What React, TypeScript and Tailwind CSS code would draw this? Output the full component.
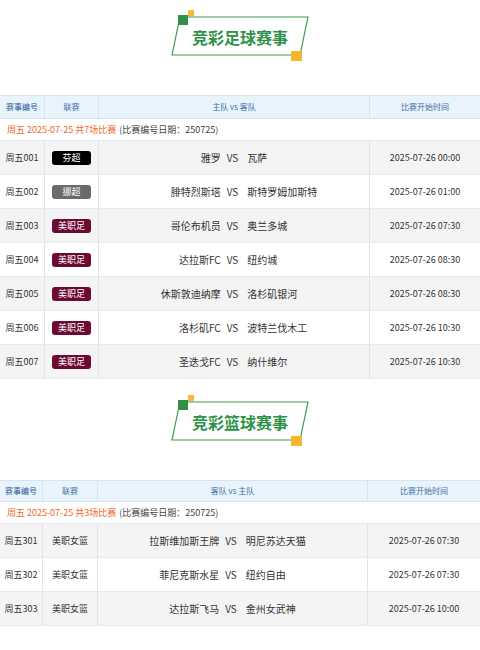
import React from "react";

type Match = { no: string; league: string; badge?: string; home: string; away: string; time: string };

const football: Match[] = [
  { no: "周五001", league: "芬超", badge: "bg-[#000000]", home: "雅罗", away: "瓦萨", time: "2025-07-26 00:00" },
  { no: "周五002", league: "挪超", badge: "bg-[#6b6b6b]", home: "腓特烈斯塔", away: "斯特罗姆加斯特", time: "2025-07-26 01:00" },
  { no: "周五003", league: "美职足", badge: "bg-[#6d0a34]", home: "哥伦布机员", away: "奥兰多城", time: "2025-07-26 07:30" },
  { no: "周五004", league: "美职足", badge: "bg-[#6d0a34]", home: "达拉斯FC", away: "纽约城", time: "2025-07-26 08:30" },
  { no: "周五005", league: "美职足", badge: "bg-[#6d0a34]", home: "休斯敦迪纳摩", away: "洛杉矶银河", time: "2025-07-26 08:30" },
  { no: "周五006", league: "美职足", badge: "bg-[#6d0a34]", home: "洛杉矶FC", away: "波特兰伐木工", time: "2025-07-26 10:30" },
  { no: "周五007", league: "美职足", badge: "bg-[#6d0a34]", home: "圣迭戈FC", away: "纳什维尔", time: "2025-07-26 10:30" },
];

const basketball: Match[] = [
  { no: "周五301", league: "美职女篮", home: "拉斯维加斯王牌", away: "明尼苏达天猫", time: "2025-07-26 07:30" },
  { no: "周五302", league: "美职女篮", home: "菲尼克斯水星", away: "纽约自由", time: "2025-07-26 07:30" },
  { no: "周五303", league: "美职女篮", home: "达拉斯飞马", away: "金州女武神", time: "2025-07-26 10:00" },
];

const Banner = ({ title }: { title: string }) => (
  <div className="relative mx-auto w-[140px] h-[56px]">
    <svg className="absolute inset-0" width="140" height="56" viewBox="0 0 140 56">
      <polygon points="10,9 138,9 130,47 2,47" fill="#ffffff" stroke="#3a9a50" strokeWidth="1.2" />
      <rect x="8" y="7" width="10" height="10" fill="#2f9146" />
      <rect x="18" y="2" width="6" height="6" fill="#f6b93b" />
      <rect x="121" y="43" width="11" height="10" fill="#f8b62d" />
    </svg>
    <div className="relative flex h-full items-center justify-center pt-[2px] text-[16px] font-bold text-[#2e9147] tracking-[0px]">
      {title}
    </div>
  </div>
);

const Table = ({
  rows,
  header,
  count,
  cols,
  headH,
}: {
  rows: Match[];
  header: string;
  count: number;
  cols: string;
  headH: string;
}) => (
  <div className="w-full text-[#333]">
    <div className={`grid ${cols} ${headH} bg-[#e8f3fb] border-y border-[#d4e4f0] text-[8px] text-[#3e6fa9]`}>
      <div className="flex items-center justify-center border-r border-[#d4e4f0] text-[#2a5a96]">赛事编号</div>
      <div className="flex items-center justify-center border-r border-[#d4e4f0]">联赛</div>
      <div className="flex items-center justify-center border-r border-[#d4e4f0]">{header}</div>
      <div className="flex items-center justify-center">比赛开始时间</div>
    </div>
    <div className="flex h-[22px] items-center border-b border-[#e0eaf2] px-[7px] text-[9px]">
      <span className="text-[#f0682a]">周五 2025-07-25 共{count}场比赛</span>
      <span className="ml-[3px] text-[#444]">(比赛编号日期：250725)</span>
    </div>
    {rows.map((m, i) => (
      <div
        key={m.no}
        className={`grid ${cols} h-[34px] border-b border-[#e3ebf2] ${i % 2 === 0 ? "bg-[#f4f4f4]" : "bg-white"}`}
      >
        <div className="flex items-center justify-center border-r border-[#d9e6f0] text-[9px]">{m.no}</div>
        <div className="flex items-center justify-center border-r border-[#d9e6f0] text-[9px]">
          {m.badge ? (
            <span className={`${m.badge} flex h-[14px] w-[39px] items-center justify-center rounded-[3px] text-[9px] text-white`}>
              {m.league}
            </span>
          ) : (
            <span>{m.league}</span>
          )}
        </div>
        <div className="grid grid-cols-[1fr_auto_1fr] items-center border-r border-[#d9e6f0] text-[10px]">
          <span className="text-right">{m.home}</span>
          <span className="pl-[6px] pr-[9px]">VS</span>
          <span className="text-left">{m.away}</span>
        </div>
        <div className="flex items-center justify-center text-[9px]">{m.time}</div>
      </div>
    ))}
  </div>
);

export default function App() {
  return (
    <div
      className="w-[480px] min-h-[650px] bg-white"
      style={{ fontFamily: '"Noto Sans CJK SC", "Noto Sans", sans-serif' }}
    >
      <div className="pt-[8px]">
        <Banner title="竞彩足球赛事" />
      </div>
      <div className="mt-[31px]">
        <Table rows={football} header="主队 vs 客队" count={7} cols="grid-cols-[45px_54px_271px_110px]" headH="h-[24px]" />
      </div>
      <div className="mt-[14px]">
        <Banner title="竞彩篮球赛事" />
      </div>
      <div className="mt-[31px]">
        <Table rows={basketball} header="客队 vs 主队" count={3} cols="grid-cols-[43px_55px_270px_112px]" headH="h-[22px]" />
      </div>
    </div>
  );
}
